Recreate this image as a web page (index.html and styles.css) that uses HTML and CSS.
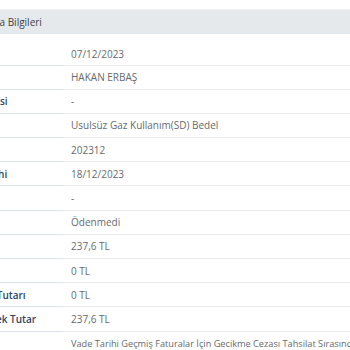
FILE: index.html
```html
<!DOCTYPE html>
<html lang="tr">
<head>
<meta charset="utf-8">
<title>Fatura Bilgileri</title>
<link rel="stylesheet" href="styles.css">
</head>
<body>
<div class="frame">
  <table class="info">
    <colgroup>
      <col class="col-label">
      <col class="col-value">
    </colgroup>
    <thead>
      <tr><th colspan="2" class="head-cell">Fatura Bilgileri</th></tr>
    </thead>
    <tbody>
      <tr class="first"><td class="label">Tarih</td><td class="value">07/12/2023</td></tr>
      <tr><td class="label">Abone</td><td class="value">HAKAN ERBAŞ</td></tr>
      <tr><td class="label">Not Bilgisi</td><td class="value">-</td></tr>
      <tr><td class="label">Tür</td><td class="value">Usulsüz Gaz Kullanım(SD) Bedel</td></tr>
      <tr><td class="label">Dönem</td><td class="value">202312</td></tr>
      <tr><td class="label">Son Tarihi</td><td class="value">18/12/2023</td></tr>
      <tr><td class="label">Endeks</td><td class="value">-</td></tr>
      <tr><td class="label">Durumu</td><td class="value">Ödenmedi</td></tr>
      <tr><td class="label">Tutar</td><td class="value">237,6 TL</td></tr>
      <tr><td class="label">KDV</td><td class="value">0 TL</td></tr>
      <tr><td class="label">Ödeme Tutarı</td><td class="value">0 TL</td></tr>
      <tr><td class="label">Ödenecek Tutar</td><td class="value">237,6 TL</td></tr>
      <tr class="last"><td class="label">Uyarı</td><td class="value note">Vade Tarihi Geçmiş Faturalar İçin Gecikme Cezası Tahsilat Sırasında Tahakkuk Ettirilecektir.</td></tr>
    </tbody>
  </table>
</div>
</body>
</html>
```

FILE: styles.css
```css
html, body {
  margin: 0;
  padding: 0;
  background: #ffffff;
}

.frame {
  width: 350px;
  height: 350px;
  overflow: hidden;
  padding-top: 9px;
  box-sizing: border-box;
}

.info {
  border-collapse: collapse;
  table-layout: fixed;
  width: 560px;
  margin-left: -49px;
  font-family: "Open Sans", "Liberation Sans", sans-serif;
  font-size: 10px;
  color: #666a6e;
}

.col-label {
  width: 112px;
}

.col-value {
  width: 448px;
}

.head-cell {
  background: #e6e9ec;
  border-top: 1px solid #eef0f2;
  height: 24px;
  padding: 0 0 0 24px;
  text-align: left;
  font-weight: 400;
  font-size: 10px;
  color: #3d4248;
  white-space: nowrap;
}

.info td {
  height: 24.2px;
  box-sizing: border-box;
  padding: 0 0 0 8px;
  border-bottom: 1px solid #e9ebee;
  white-space: nowrap;
  overflow: hidden;
}

.info tr.first td {
  height: 31px;
  padding-top: 9px;
}

.info tr.last td {
  border-bottom: none;
}

.label {
  font-weight: 600;
  color: #2c4365;
  border-bottom-color: #dde3ea !important;
}

/* the wording of the bill note runs a touch smaller than the values */
.note {
  font-size: 9.2px;
}
```
